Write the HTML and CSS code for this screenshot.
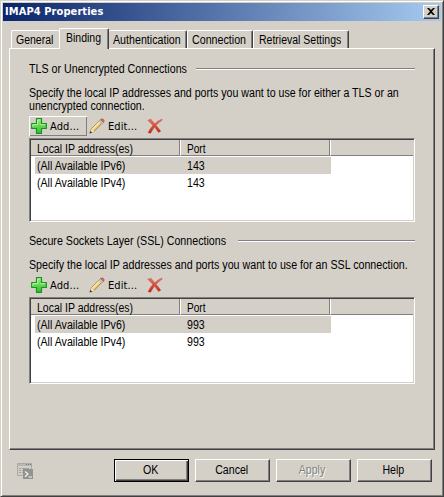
FILE: index.html
```html
<!DOCTYPE html>
<html lang="en">
<head>
<meta charset="utf-8">
<title>IMAP4 Properties</title>
<link rel="stylesheet" href="styles.css">
</head>
<body>
<svg width="0" height="0" class="defs">
  <defs>
    <linearGradient id="green" x1="0" y1="0" x2="0" y2="1"><stop offset="0" stop-color="#9be77f"/><stop offset="1" stop-color="#2fc22c"/></linearGradient>
    <linearGradient id="red" x1="0" y1="0" x2="0" y2="1"><stop offset="0" stop-color="#e87462"/><stop offset="1" stop-color="#c32418"/></linearGradient>
    <symbol id="plus" viewBox="0 0 16 16">
      <path d="M5.5 .7h5v4.8h4.8v5h-4.8v4.8h-5v-4.8H.7v-5h4.8z" fill="url(#green)" stroke="#169323" stroke-width="1.2" stroke-linejoin="round"/>
      <path d="M6.6 6.5V1.9h2.8M1.9 9V6.6h4.7M9.5 6.6h4.6" fill="none" stroke="#c3f5ac" stroke-width=".9"/>
    </symbol>
    <symbol id="pencil" viewBox="0 0 16 16">
      <path d="M1 15l1.6-4.400L11.600 1.800l2.500 2.300-8.900 9.200z" fill="#f0cd78" stroke="#8b6a31" stroke-width=".8"/>
      <path d="M3.4 11.1l8-8" stroke="#fff0b7" stroke-width="1.2"/>
      <path d="M10.2 3l1.4-1.4 2.9 2.9-1.4 1.4z" fill="#c5c9d2" stroke="#8a8c96" stroke-width=".5"/>
      <path d="M11.6 1.6q1.4-1.5 2.9-.1t0 3z" fill="#d66a60" stroke="#a64d4c" stroke-width=".6"/>
      <path d="M1 15l1.5-4 2.7 2.6z" fill="#f5e7c9"/><path d="M.5 15.500l1-2.500 1.700 1.500z" fill="#333"/>
    </symbol>
    <symbol id="cross" viewBox="0 0 16 16">
      <path d="M.8 2.2L4 1.3q1.8 2.6 3.9 4.5Q10.8 2.200 14.900 1.200L15.300 2Q11.800 4.200 9 7.300q2.500 2.800 4.800 5.900l-2.300 1.200Q9.500 11.900 7.600 9.100q-2.200 3-4 6.200L1 14.700q2-4 4.900-7.500Q3.100 4.700.8 2.200z" fill="url(#red)" stroke="#b83c2d" stroke-width=".4"/>
    </symbol>
  </defs>
</svg>
<div class="window">
  <header class="titlebar"><span class="title">IMAP4 Properties</span>
    <button class="close" aria-label="Close"><svg width="8" height="7" viewBox="0 0 8 7"><path d="M0 0h2l2 2 2-2h2L5 3.500 8 7H6L4 5 2 7H0l3-3.500z" fill="#000"/></svg></button>
  </header>
  <nav class="tabs">
    <div class="tab general"><span class="fit">General</span></div>
    <div class="tab active"><span class="fit">Binding</span></div>
    <div class="tab auth"><span class="fit">Authentication</span></div>
    <div class="tab connection"><span class="fit">Connection</span></div>
    <div class="tab retrieval"><span class="fit">Retrieval Settings</span></div>
  </nav>
  <main class="page">
    <section class="group tls">
      <h2><span class="fit">TLS or Unencrypted Connections</span><i></i></h2>
      <p><span class="fit">Specify the local IP addresses and ports you want to use for either a TLS or an<br>unencrypted connection.</span></p>
      <div class="toolbar">
        <div class="tool raised"><svg width="16" height="16"><use href="#plus"/></svg><span>Add...</span></div>
        <div class="tool edit"><svg width="16" height="16"><use href="#pencil"/></svg><span>Edit...</span></div>
        <div class="tool"><svg width="16" height="16"><use href="#cross"/></svg></div>
      </div>
      <div class="list">
        <div class="head"><div><span class="fit">Local IP address(es)</span></div><div><span class="fit port">Port</span></div><div></div></div>
        <div class="row selected"><span class="fit">(All Available IPv6)</span><span class="fit">143</span></div>
        <div class="row"><span class="fit">(All Available IPv4)</span><span class="fit">143</span></div>
      </div>
    </section>
    <section class="group ssl">
      <h2><span class="fit">Secure Sockets Layer (SSL) Connections</span><i></i></h2>
      <p><span class="fit">Specify the local IP addresses and ports you want to use for an SSL connection.</span></p>
      <div class="toolbar">
        <div class="tool add"><svg width="16" height="16"><use href="#plus"/></svg><span>Add...</span></div>
        <div class="tool edit"><svg width="16" height="16"><use href="#pencil"/></svg><span>Edit...</span></div>
        <div class="tool"><svg width="16" height="16"><use href="#cross"/></svg></div>
      </div>
      <div class="list">
        <div class="head"><div><span class="fit">Local IP address(es)</span></div><div><span class="fit port">Port</span></div><div></div></div>
        <div class="row selected"><span class="fit">(All Available IPv6)</span><span class="fit">993</span></div>
        <div class="row"><span class="fit">(All Available IPv4)</span><span class="fit">993</span></div>
      </div>
    </section>
  </main>
  <footer class="actions">
    <svg class="shell" width="16" height="16" viewBox="0 0 16 16">
      <path d="M.5.5h14v12H.500z" fill="#d0cec9" stroke="#aaa9a5"/><path d="M1 1h13v2H1z" fill="#b8b7b3"/>
      <path d="M9 1.500h1M11 1.500h1M13 1.500h1" stroke="#777"/><path d="M2 5.500h2M5 5.500h7M2 7.500h2M5 7.500h3M2 9.500h2M5 9.500h1" stroke="#a3a29f"/>
      <path d="M6 6h10v10H6z" fill="#92928f"/><path d="M8 8.500l3 2.500-3 2.800M11.500 14H15" fill="none" stroke="#f3f3ef" stroke-width="1.200"/>
    </svg>
    <button class="btn default"><span class="fit">OK</span></button>
    <button class="btn"><span class="fit">Cancel</span></button>
    <button class="btn disabled"><span class="fit">Apply</span></button>
    <button class="btn"><span class="fit">Help</span></button>
  </footer>
</div>
</body>
</html>
```
FILE: styles.css
```css
* { box-sizing: border-box; }
body { margin: 0; background: #d4d0c8; font: 12px/13px "Liberation Sans", Arial, sans-serif; color: #000; overflow: hidden; white-space: nowrap; }
.defs { position: absolute; }
svg { display: block; flex: none; }
button { font: inherit; color: inherit; padding: 0; border-radius: 0; }
.fit { display: inline-block; justify-self: start; transform: scaleX(.885); transform-origin: left; }
.head .fit { transform: scaleX(.875); }
.head .port { transform: scaleX(.84); }
.window { width: 444px; height: 497px; border: 1px solid; border-color: #d4d0c8 #404040 #404040 #d4d0c8; padding: 1px; box-shadow: inset 1px 1px #fff, inset -1px -1px #808080; display: flex; flex-direction: column; }
.titlebar { height: 18px; flex: none; margin: 1px 1px 0; padding: 0 2px; display: flex; align-items: center; justify-content: space-between; background: linear-gradient(90deg, #0a246a, #a6caf0); color: #fff; }
.title { font: bold 11px/16px "DejaVu Sans Condensed", "DejaVu Sans", sans-serif; letter-spacing: .08px; }
.close { width: 16px; height: 14px; background: #d4d0c8; border: 1px solid; border-color: #fff #404040 #404040 #fff; box-shadow: inset -1px -1px #808080; display: flex; align-items: center; justify-content: center; padding: 0 1px 1px 0; }
.tabs { height: 27px; flex: none; display: flex; align-items: flex-end; padding-left: 9px; }
.tab { height: 18px; flex: none; border-top: 1px solid #fff; border-left: 1px solid #fff; border-right: 1px solid #404040; box-shadow: inset -1px 0 #808080; border-radius: 2px 2px 0 0; padding: 3px 0 0 4px; }
.tab .fit { transform: scaleX(.875); }
.general { width: 48px; border-right: 0; box-shadow: none; }
.tab.active { width: 50px; height: 21px; margin-bottom: -1px; background: #d4d0c8; z-index: 1; padding: 3px 0 0 6px; }
.auth { width: 78px; border-left: 0; }
.auth .fit { transform: scaleX(.89); }
.connection { width: 66px; }
.connection .fit { transform: scaleX(.89); }
.retrieval { width: 96px; padding-left: 5px; }
.page { width: 426px; height: 402px; flex: none; margin-left: 7px; border: 1px solid; border-color: #fff #404040 #404040 #fff; box-shadow: inset -1px -1px #808080; padding: 14px 18px 0 19px; }
.group { width: 386px; }
.ssl { margin-top: 13px; }
h2 { margin: 0; font: inherit; height: 13px; display: flex; align-items: center; justify-content: space-between; }
h2 i { flex: none; height: 2px; width: 219px; background: linear-gradient(#808080 50%, #fff 50%); margin-bottom: 1px; }
h2 .fit { transform: scaleX(.89); width: 0; }
.ssl h2 i { width: 177px; }
p { margin: 11px 0 0; height: 29px; }
.ssl p { height: 16px; }
.ssl p .fit { transform: scaleX(.89); }
.toolbar { height: 20px; display: flex; }
.tool { height: 20px; display: flex; align-items: center; padding: 0 2px; font: 11px/13px "DejaVu Sans Condensed", "DejaVu Sans", sans-serif; letter-spacing: .1px; }
.tool span { margin-left: 3px; }
.raised, .add { width: 58px; }
.raised { box-shadow: inset 1px 1px #fff, inset -1px -1px #808080; }
.edit { width: 58px; }
.list { height: 84px; margin-top: 2px; background: #fff; border: 1px solid; border-color: #808080 #fff #fff #808080; box-shadow: inset 1px 1px #404040, inset -1px -1px #d4d0c8; padding: 1px; }
.ssl .list { height: 87px; }
.head { height: 16px; display: grid; grid-template-columns: 149px 150px 1fr; margin-bottom: 1px; }
.head div { height: 16px; background: #d4d0c8; border-bottom: 1px solid #808080; border-right: 1px solid #808080; border-left: 1px solid #fff; padding: 3px 0 0 6px; }
.head div:first-child { border-left: 0; }
.head div:last-child { border-right: 0; }
.row { margin-left: 4px; width: 296px; height: 17px; display: grid; grid-template-columns: 150px 1fr; padding: 3px 0 0 2px; }
.selected { background: #d4d0c8; }
.actions { display: flex; margin-top: 9px; padding-left: 15px; gap: 6px; }
.shell { margin: 4px 75px 0 0; }
.btn { width: 75px; height: 23px; background: #d4d0c8; border: 1px solid; border-color: #fff #404040 #404040 #fff; box-shadow: inset -1px -1px #808080; padding-right: 2px; }
.btn .fit { transform-origin: center; }
.default { border-color: #000; box-shadow: inset 1px 1px #fff, inset -1px -1px #404040, inset -2px -2px #808080; }
.disabled { color: #808080; text-shadow: 1px 1px #fff; }
```
